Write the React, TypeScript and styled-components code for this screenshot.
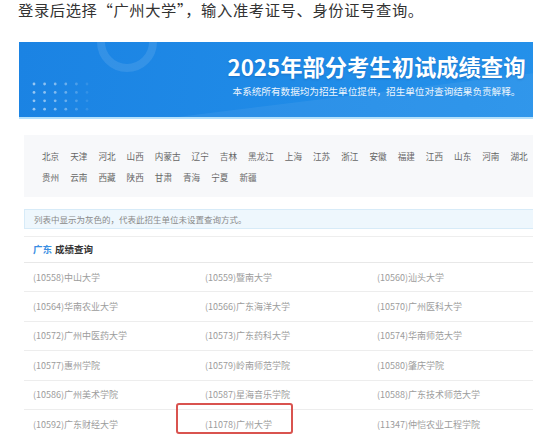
import styled, { createGlobalStyle } from 'styled-components'

const GlobalStyle = createGlobalStyle`
  html, body {
    margin: 0;
    padding: 0;
    background: #fff;
    overflow: hidden;
  }
  body {
    font-family: "Noto Sans CJK SC", "Noto Sans", "Liberation Sans", sans-serif;
  }
`

const Page = styled.div`
  width: 720px;
  padding-left: 18px;
`

const Intro = styled.p`
  margin: 0;
  font-size: 15.3px;
  line-height: 18px;
  letter-spacing: 0.6px;
  color: #333;
`

const Banner = styled.div`
  position: relative;
  overflow: hidden;
  margin: 24px 0 0 1px;
  height: 77px;
  padding: 9px 0 0 209px;
  box-sizing: border-box;
  background: linear-gradient(100deg, #1b83e3 0%, #218de8 50%, #2995ec 100%);
  border-bottom: 2px solid #b5e1fc;

  &::before {
    content: '';
    position: absolute;
    inset: 0;
    background: rgba(255, 255, 255, 0.06);
    clip-path: polygon(22% 100%, 100% 8%, 100% 100%);
  }
`

const Ring = styled.div`
  position: absolute;
  left: 78px;
  top: -30px;
  width: 44px;
  height: 44px;
  border: 8px solid rgba(255, 255, 255, 0.1);
  border-radius: 50%;
`

const Dots = styled.svg`
  position: absolute;
  left: 12px;
  top: 39px;
`

const Heading = styled.div`
  position: relative;
  display: inline-flex;
  flex-direction: column;
  align-items: center;
  width: 297px;
  color: #fff;
`

const Title = styled.h1`
  margin: 0;
  font-size: 22.3px;
  line-height: 30px;
  font-weight: 700;
  white-space: nowrap;
  text-shadow: 0 1px 2px rgba(0, 40, 110, 0.25);
`

const Subtitle = styled.div`
  margin-top: 4px;
  font-size: 9.6px;
  line-height: 12px;
  white-space: nowrap;
  opacity: 0.92;
`

const Content = styled.div`
  margin-left: 6px;
`

const Provinces = styled.div`
  margin-top: 16px;
  height: 62px;
  box-sizing: border-box;
  padding: 14px 0 0 18px;
  background: #f7f8fa;
  display: flex;
  flex-direction: column;
  gap: 7px;
`

const ProvinceRow = styled.div`
  display: flex;
  white-space: nowrap;
`

const Province = styled.span`
  font-size: 8.6px;
  line-height: 14px;
  color: #666;
  margin-right: 11px;
`

const Notice = styled.div`
  margin-top: 12px;
  height: 20px;
  box-sizing: border-box;
  padding-left: 9px;
  background: #eef7fd;
  border: 1px solid #d7ebf8;
  font-size: 8.5px;
  line-height: 18px;
  color: #8a8a8a;
`

const Section = styled.div`
  margin-top: 7px;
  border-top: 1px solid #eeeeee;
`

const SectionHead = styled.div`
  height: 26px;
  box-sizing: border-box;
  padding-left: 9px;
  border-bottom: 1px solid #e8e8e8;
  font-size: 9.5px;
  line-height: 25px;
  font-weight: 700;
  color: #333;

  em {
    font-style: normal;
    color: #3b8fe3;
    margin-right: 3px;
  }
`

const Row = styled.div`
  display: grid;
  grid-template-columns: repeat(3, 172px);
  align-items: center;
  height: 29.4px;
  box-sizing: border-box;
  border-bottom: 1px solid #ededed;
`

const Cell = styled.div<{ $marked?: boolean }>`
  position: relative;
  padding-left: 9px;
  font-size: 9px;
  color: #9c9c9c;

  ${({ $marked }) =>
    $marked &&
    `
    &::after {
      content: '';
      position: absolute;
      left: -20px;
      top: -15px;
      width: 117px;
      height: 31px;
      box-sizing: border-box;
      border: 2px solid #d9534f;
      border-radius: 3px;
    }
  `}
`

const rowOne = [
  '北京', '天津', '河北', '山西', '内蒙古', '辽宁', '吉林', '黑龙江', '上海', '江苏', '浙江',
  '安徽', '福建', '江西', '山东', '河南', '湖北', '湖南', '广东', '广西', '海南', '重庆', '四川',
]
const rowTwo = ['贵州', '云南', '西藏', '陕西', '甘肃', '青海', '宁夏', '新疆']

const schools = [
  ['(10558)中山大学', '(10559)暨南大学', '(10560)汕头大学'],
  ['(10564)华南农业大学', '(10566)广东海洋大学', '(10570)广州医科大学'],
  ['(10572)广州中医药大学', '(10573)广东药科大学', '(10574)华南师范大学'],
  ['(10577)惠州学院', '(10579)岭南师范学院', '(10580)肇庆学院'],
  ['(10586)广州美术学院', '(10587)星海音乐学院', '(10588)广东技术师范大学'],
  ['(10592)广东财经大学', '(11078)广州大学', '(11347)仲恺农业工程学院'],
]

const dotAlpha = [0.55, 0.5, 0.45, 0.35, 0.22, 0.1]

export default function App() {
  return (
    <>
      <GlobalStyle />
      <Page>
        <Intro>登录后选择“广州大学”，输入准考证号、身份证号查询。</Intro>

        <Banner>
          <Ring />
          <Dots width="70" height="34">
            {[0, 1, 2, 3].map((r) =>
              dotAlpha.map((a, c) => (
                <circle key={`${r}-${c}`} cx={3 + c * 10.6} cy={3 + r * 8.4} r={1.4} fill="#fff" fillOpacity={a} />
              ))
            )}
          </Dots>
          <Heading>
            <Title>2025年部分考生初试成绩查询</Title>
            <Subtitle>本系统所有数据均为招生单位提供，招生单位对查询结果负责解释。</Subtitle>
          </Heading>
        </Banner>

        <Content>
          <Provinces>
            <ProvinceRow>
              {rowOne.map((p) => (
                <Province key={p}>{p}</Province>
              ))}
            </ProvinceRow>
            <ProvinceRow>
              {rowTwo.map((p) => (
                <Province key={p}>{p}</Province>
              ))}
            </ProvinceRow>
          </Provinces>

          <Notice>列表中显示为灰色的，代表此招生单位未设置查询方式。</Notice>

          <Section>
            <SectionHead>
              <em>广东</em>成绩查询
            </SectionHead>
            {schools.map((row, i) => (
              <Row key={i}>
                {row.map((s) => (
                  <Cell key={s} $marked={s.startsWith('(11078)')}>
                    {s}
                  </Cell>
                ))}
              </Row>
            ))}
          </Section>
        </Content>
      </Page>
    </>
  )
}
